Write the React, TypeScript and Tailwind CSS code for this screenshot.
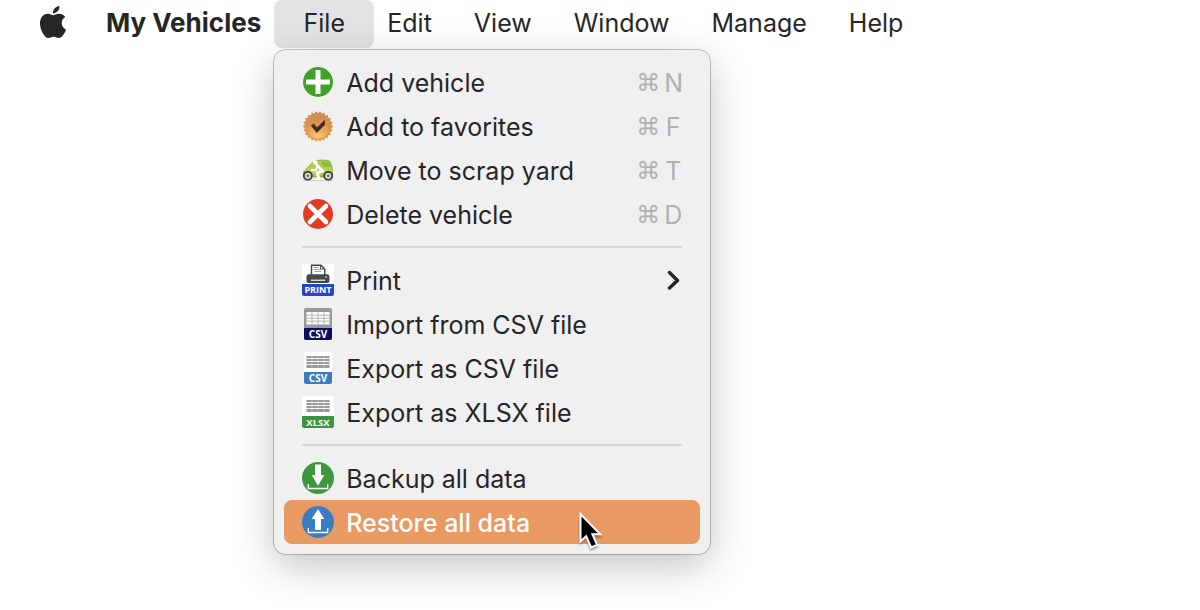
import type { ReactNode } from "react";
import { SiApple } from "react-icons/si";

function AddIcon() {
  return (
    <svg viewBox="0 0 32 32" className="size-8" aria-hidden="true">
      <circle cx="16" cy="16" r="15.5" fill="#fff" opacity=".7" />
      <circle cx="16" cy="16" r="15" fill="#40a02a" />
      <path d="M16 4v24M4 16h24" stroke="#fff" strokeWidth="5" />
    </svg>
  );
}

const badgePoints = Array.from({ length: 44 }, (_, i) => {
  const r = i % 2 === 0 ? 15.3 : 13.2;
  const a = (i * Math.PI * 2) / 44;
  return `${(16 + r * Math.cos(a)).toFixed(2)},${(16.5 + r * Math.sin(a)).toFixed(2)}`;
}).join(" ");

function FavoriteIcon() {
  return (
    <svg viewBox="0 0 32 32" className="size-8" aria-hidden="true">
      <defs>
        <linearGradient id="badge" x1="0" y1="0" x2="0" y2="1">
          <stop offset="0" stopColor="#c98a55" />
          <stop offset=".5" stopColor="#db9552" />
          <stop offset="1" stopColor="#e89a48" />
        </linearGradient>
        <radialGradient id="badgeGlow" cx=".5" cy=".95" r=".6">
          <stop offset="0" stopColor="#ffc878" />
          <stop offset="1" stopColor="#ffc878" stopOpacity="0" />
        </radialGradient>
      </defs>
      <polygon points={badgePoints} fill="url(#badge)" />
      <circle cx="16" cy="16.5" r="12" fill="url(#badgeGlow)" />
      <path d="M8.800 15.500l3.200-2 2.900 4 7.900-7.800v5.200l-8 8.200z" fill="#4a2a20" />
    </svg>
  );
}

function ScrapIcon() {
  return (
    <svg viewBox="0 0 32 32" className="size-8" aria-hidden="true">
      <defs>
        <linearGradient id="car" x1="0" y1="0" x2="0" y2="1">
          <stop offset="0" stopColor="#a9cf42" />
          <stop offset=".35" stopColor="#aecb48" />
          <stop offset=".7" stopColor="#c4d664" />
          <stop offset="1" stopColor="#86b43a" />
        </linearGradient>
      </defs>
      <path
        d="M1.500 22c-.6-3.500.3-5.800 3.500-7.500C8.500 9.500 12 7 16 6.300c4.500-.6 9-.3 11.500.7 2.500 3.500 3.300 8 3 14l-2 2H3z"
        fill="url(#car)"
        stroke="#82a632"
        strokeWidth=".7"
      />
      <path d="M19 7.800h8c1.200 1.600 1.700 3 1.900 5l-7-.4z" fill="#8fbc38" />
      <circle cx="13.500" cy="8.800" r="2.300" fill="#fff" />
      <path d="M15.500 11.800l5 5.200-5.300 2 1.800 6.200" fill="none" stroke="#fff" strokeWidth="3" strokeLinejoin="round" strokeLinecap="round" />
      <path d="M15 12.500l-1 3.700H9.500" fill="none" stroke="#fff" strokeWidth="1.700" strokeLinejoin="round" strokeLinecap="round" />
      <g stroke="#3b3e38" strokeWidth="1.800" fill="#deded8">
        <circle cx="5.800" cy="21.800" r="4" />
        <circle cx="26.200" cy="21.800" r="4" />
      </g>
      <g fill="#666">
        <circle cx="5.800" cy="21.800" r="1.400" />
        <circle cx="26.200" cy="21.800" r="1.400" />
      </g>
      <path d="M1 26.500h30" stroke="#777" strokeOpacity=".3" />
    </svg>
  );
}

function DeleteIcon() {
  return (
    <svg viewBox="0 0 32 32" className="size-8" aria-hidden="true">
      <circle cx="16" cy="16" r="15.5" fill="#fff" opacity=".7" />
      <circle cx="16" cy="16" r="15" fill="#e03c26" />
      <path d="M8 8l16 16M24 8L8 24" stroke="#fff" strokeWidth="4.600" strokeLinecap="round" />
    </svg>
  );
}

function PrintIcon() {
  return (
    <svg viewBox="0 0 32 32" className="size-8" aria-hidden="true">
      <rect width="32" height="32" rx="1.500" fill="#fff" />
      <path d="M9.500 11V1.200h9.500l3.800 3.800v6" fill="#fff" stroke="#484848" strokeWidth="1.500" />
      <path d="M18.500 1.500V5h4" fill="none" stroke="#484848" strokeWidth="1.100" />
      <path d="M11.500 3.500h5M11.500 5.500h6M12.500 7.500h7" stroke="#9b9cb4" strokeWidth="1" />
      <path d="M7 10.300h18a2.500 2.500 0 0 1 2.500 2.500V17a2 2 0 0 1-2 2h-19a2 2 0 0 1-2-2v-4.200A2.500 2.500 0 0 1 7 10.300z" fill="#484848" />
      <path d="M9 16.200h14" stroke="#fff" strokeWidth="1.100" />
      <circle cx="24" cy="13" r=".8" fill="#fff" />
      <path d="M0 20h32v10a2 2 0 0 1-2 2H2a2 2 0 0 1-2-2z" fill="#2447c8" />
      <text x="16" y="29.300" textAnchor="middle" fontSize="9" fontWeight="700" fill="#fff" className="font-['Open_Sans',sans-serif]">
        PRINT
      </text>
    </svg>
  );
}

function ImportCsvIcon() {
  return (
    <svg viewBox="0 0 32 32" className="size-8" aria-hidden="true">
      <rect x="2" width="28" height="32" rx="2" fill="#999" />
      <path d="M4.500 4h23v12.500h-23z" fill="#fff" />
      <path d="M4.500 7.200h23M4.500 10.200h23M4.500 13.200h23M10 4v12.500M16 4v12.500M22 4v12.500" stroke="#aaa" strokeWidth=".9" />
      <path d="M2 20h28v10a2 2 0 0 1-2 2H4a2 2 0 0 1-2-2z" fill="#0c0d5c" />
      <text x="16" y="29.500" textAnchor="middle" fontSize="10" fontWeight="700" fill="#fff" className="font-['Open_Sans',sans-serif]">
        CSV
      </text>
    </svg>
  );
}

function SheetIcon({ label, wide }: { label: string; wide?: boolean }) {
  const x = wide ? 0 : 2;
  const w = wide ? 32 : 28;
  return (
    <svg viewBox="0 0 32 32" className="size-8" aria-hidden="true">
      <rect x={x} width={w} height="32" rx="2" fill="#fff" />
      <path d="M4.500 4h23v12h-23z" fill="#999" />
      <path d="M4.500 6.500h23M4.500 9.500h23M4.500 12.500h23" stroke="#fff" strokeWidth=".9" />
      <path d="M10 4v12M16 4v12M22 4v12" stroke="#fff" strokeOpacity=".6" strokeWidth=".6" />
      <path d={`M${x} 20h${w}v10a2 2 0 0 1-2 2h-${w - 4}a2 2 0 0 1-2-2z`} fill={wide ? "#3d9440" : "#3a7cc0"} />
      <text x="16" y="29.500" textAnchor="middle" fontSize={wide ? 9.5 : 10} fontWeight="700" fill="#fff" className="font-['Open_Sans',sans-serif]">
        {label}
      </text>
    </svg>
  );
}

function TransferIcon({ up }: { up?: boolean }) {
  return (
    <svg viewBox="0 0 32 32" className="size-8" aria-hidden="true">
      <circle cx="16" cy="16" r="16" fill={up ? "#3b7dc4" : "#3f973d"} />
      <path d={up ? "M16 3l6.300 10h-3.300v11h-6V13H9.700z" : "M13 2.500h6V13h3.300L16 23.800 9.700 13H13z"} fill="#fff" />
      <path d="M6.300 22v4.500h19.400V22" fill="none" stroke="#fff" strokeWidth="1.300" strokeLinejoin="round" />
    </svg>
  );
}

function Cursor() {
  return (
    <svg viewBox="0 0 28 42" className="h-[42px] w-7 drop-shadow-[0_2px_1px_rgba(0,0,0,0.35)]" aria-hidden="true">
      <path
        d="M1.500 4v27.500l5.700-5.200 4.900 11.200 6-2.700-4.700-10.600h7.900z"
        fill="#000"
        stroke="#fff"
        strokeWidth="2"
      />
    </svg>
  );
}

type Item = { label: string; icon: ReactNode; shortcut?: string; submenu?: boolean; active?: boolean };

const groups: Item[][] = [
  [
    { label: "Add vehicle", icon: <AddIcon />, shortcut: "N" },
    { label: "Add to favorites", icon: <FavoriteIcon />, shortcut: "F" },
    { label: "Move to scrap yard", icon: <ScrapIcon />, shortcut: "T" },
    { label: "Delete vehicle", icon: <DeleteIcon />, shortcut: "D" },
  ],
  [
    { label: "Print", icon: <PrintIcon />, submenu: true },
    { label: "Import from CSV file", icon: <ImportCsvIcon /> },
    { label: "Export as CSV file", icon: <SheetIcon label="CSV" /> },
    { label: "Export as XLSX file", icon: <SheetIcon label="XLSX" wide /> },
  ],
  [
    { label: "Backup all data", icon: <TransferIcon /> },
    { label: "Restore all data", icon: <TransferIcon up />, active: true },
  ],
];

function MenuRow({ item }: { item: Item }) {
  return (
    <button
      type="button"
      role="menuitem"
      aria-haspopup={item.submenu ? "menu" : undefined}
      className={`relative flex h-11 w-full items-center gap-3 rounded-lg px-[18px] text-left ${
        item.active ? "bg-[#e99a63] font-medium text-white" : ""
      }`}
    >
      {item.icon}
      <span className="flex-1 pt-0.5 whitespace-nowrap">{item.label}</span>
      {item.shortcut && (
        <span className="flex items-center gap-1 pt-0.5 text-[#b0b0b0]">
          <span className="font-['DejaVu_Sans',sans-serif] text-2xl">⌘</span>
          <span className="w-[18px] text-center">{item.shortcut}</span>
        </span>
      )}
      {item.submenu && (
        <svg viewBox="0 0 16 20" className="h-5 w-4" aria-hidden="true">
          <path d="M3.500 2.500L11.500 10.500L3.500 18" fill="none" stroke="#262626" strokeWidth="3.400" strokeLinecap="round" strokeLinejoin="round" />
        </svg>
      )}
      {item.active && (
        <span className="absolute top-2.5 left-[295px]">
          <Cursor />
        </span>
      )}
    </button>
  );
}

function FileMenu() {
  return (
    <div
      role="menu"
      aria-label="File"
      className="absolute top-full left-0 z-10 mt-0.5 w-[436px] rounded-xl bg-[#f0f0f0] p-2.5 shadow-[0_0_0_1px_rgba(0,0,0,0.22),0_12px_40px_rgba(0,0,0,0.24)]"
    >
      {groups.map((group, i) => (
        <div key={i} role="group">
          {i > 0 && <hr className="mx-[18px] my-2.5 border-t-2 border-[#d6d6d6]" />}
          {group.map((item) => (
            <MenuRow key={item.label} item={item} />
          ))}
        </div>
      ))}
    </div>
  );
}

export default function App() {
  return (
    <div className="min-h-screen bg-white font-['Inter','Liberation_Sans',sans-serif] text-[25px] text-[#262626]">
      <nav aria-label="Menu bar" className="flex h-12 items-center pl-[37px] leading-8">
        <button type="button" aria-label="Apple menu" className="-mt-1 mr-4">
          <SiApple className="size-8" />
        </button>
        <button type="button" className="h-12 px-[21px] pb-0.5 text-[26px] font-bold whitespace-nowrap">
          My Vehicles
        </button>
        <div className="relative -mx-2">
          <button
            type="button"
            aria-haspopup="menu"
            aria-expanded="true"
            className="h-12 w-[100px] rounded-lg bg-[#e3e3e3] pb-0.5"
          >
            File
          </button>
          <FileMenu />
        </div>
        {["Edit", "View", "Window", "Manage", "Help"].map((name) => (
          <button key={name} type="button" className="h-12 px-[21px] pb-0.5">
            {name}
          </button>
        ))}
      </nav>
    </div>
  );
}
